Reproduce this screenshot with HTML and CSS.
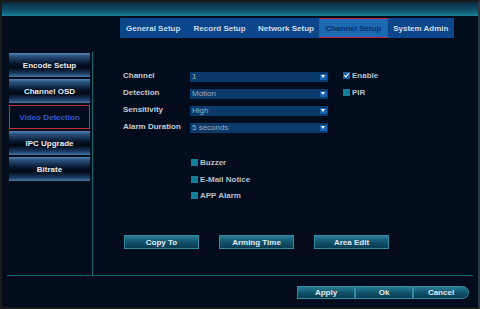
FILE: index.html
```html
<!DOCTYPE html>
<html lang="en">
<head>
    <meta charset="UTF-8">
    <title>Channel Setup</title>
    <link rel="stylesheet" href="styles.css">
</head>
<body>
<div class="screen">
    <div class="header"></div>

    <div class="tabs">
        <div class="tab">General Setup</div>
        <div class="tab">Record Setup</div>
        <div class="tab">Network Setup</div>
        <div class="tab active">Channel Setup</div>
        <div class="tab">System Admin</div>
    </div>

    <div class="main">
        <div class="sidebar">
            <div class="menu-item">Encode Setup</div>
            <div class="menu-item">Channel OSD</div>
            <div class="menu-item selected">Video Detection</div>
            <div class="menu-item">IPC Upgrade</div>
            <div class="menu-item">Bitrate</div>
        </div>

        <div class="content">
            <div class="row">
                <span class="label">Channel</span>
                <div class="select"><span>1</span><i class="arrow"></i></div>
                <label class="check"><span class="box checked"></span>Enable</label>
            </div>
            <div class="row">
                <span class="label">Detection</span>
                <div class="select"><span>Motion</span><i class="arrow"></i></div>
                <label class="check"><span class="box"></span>PIR</label>
            </div>
            <div class="row">
                <span class="label">Sensitivity</span>
                <div class="select"><span>High</span><i class="arrow"></i></div>
            </div>
            <div class="row">
                <span class="label">Alarm Duration</span>
                <div class="select"><span>5 seconds</span><i class="arrow"></i></div>
            </div>

            <div class="alarms">
                <label class="check"><span class="box"></span>Buzzer</label>
                <label class="check"><span class="box"></span>E-Mail Notice</label>
                <label class="check"><span class="box"></span>APP Alarm</label>
            </div>

            <div class="actions">
                <div class="btn">Copy To</div>
                <div class="btn">Arming Time</div>
                <div class="btn">Area Edit</div>
            </div>
        </div>
    </div>

    <div class="footer">
        <div class="btn foot">Apply</div>
        <div class="btn foot">Ok</div>
        <div class="btn foot last">Cancel</div>
    </div>
</div>
</body>
</html>
```

FILE: styles.css
```css
* {
    box-sizing: border-box;
}
body {
    margin: 0;
    background: #1a1a1a;
    font-family: "Liberation Sans", Arial, sans-serif;
    font-size: 8px;
    font-weight: bold;
}
.screen {
    width: 480px;
    height: 309px;
    border: 2px solid #1b1b1b;
    border-right-color: #2a3a44;
    background: #020c1c;
    display: flex;
    flex-direction: column;
}
.header {
    height: 14px;
    background: linear-gradient(#0a2a40, #105a74 70%, #1a8298);
}
.tabs {
    display: flex;
    height: 20px;
    margin: 2px 0 0 118px;
    width: 334px;
    background: #0b468a;
}
.tab {
    display: flex;
    align-items: center;
    justify-content: center;
    padding: 0 5px;
    flex: 1;
    color: #d0dcea;
    white-space: nowrap;
}
.tab.active {
    background: #1a6ab4;
    border: 1px solid #c42434;
    color: #0e2e66;
}
.main {
    display: flex;
    height: 238px;
    margin: 0 5px;
    border-bottom: 1px solid #156a70;
}
.sidebar {
    width: 86px;
    margin-top: 14px;
    padding: 1px 0 0 2px;
    border-right: 1px solid #156a70;
    display: flex;
    flex-direction: column;
    gap: 2px;
}
.menu-item {
    width: 81px;
    height: 24px;
    display: flex;
    align-items: center;
    justify-content: center;
    color: #e8eef4;
    background: linear-gradient(#5a86b0, #2a5480 12%, #06142a 45%, #020814 60%, #1a3a62 85%, #4a78a6);
}
.menu-item.selected {
    background: #020c1c;
    border: 1px solid #b8303c;
    color: #3458d0;
}
.content {
    flex: 1;
    padding: 29px 0 0 30px;
    color: #c4ccd6;
}
.row {
    display: flex;
    align-items: center;
    height: 17px;
}
.label {
    width: 67px;
}
.select {
    width: 138px;
    height: 10px;
    margin-top: 2px;
    background: #0a3a6c;
    display: flex;
    align-items: center;
    justify-content: space-between;
    padding-left: 2px;
    color: #9cacbe;
    font-weight: normal;
}
.arrow {
    width: 7px;
    height: 6px;
    margin-right: 1px;
    background: #1462b0;
    position: relative;
}
.arrow::after {
    content: "";
    position: absolute;
    left: 1px;
    top: 1px;
    border-left: 2.5px solid transparent;
    border-right: 2.5px solid transparent;
    border-top: 3px solid #ffffff;
}
.check {
    display: flex;
    align-items: center;
    gap: 2px;
    color: #b8c2cc;
}
.row .check {
    margin-left: 15px;
}
.box {
    width: 7px;
    height: 7px;
    background: #167e98;
    position: relative;
}
.box.checked {
    background: #1c5ea8;
}
.box.checked::after {
    content: "";
    position: absolute;
    left: 2px;
    top: 0;
    width: 2px;
    height: 4px;
    border: solid #ffffff;
    border-width: 0 1px 1px 0;
    transform: rotate(40deg);
}
.alarms {
    margin: 23px 0 0 68px;
    display: flex;
    flex-direction: column;
    gap: 7.5px;
}
.actions {
    display: flex;
    gap: 20px;
    margin: 35px 0 0 1px;
}
.btn {
    width: 75px;
    height: 14px;
    display: flex;
    align-items: center;
    justify-content: center;
    color: #e0eaf2;
    border: 1px solid #2f8aa2;
    background: linear-gradient(#2c7c96, #11536c 50%, #0a3c52);
}
.footer {
    display: flex;
    justify-content: flex-end;
    padding: 10px 9px 0 0;
}
.btn.foot {
    width: 58px;
    height: 13px;
}
.btn.last {
    width: 56px;
    border-radius: 0 7px 7px 0;
}
```
